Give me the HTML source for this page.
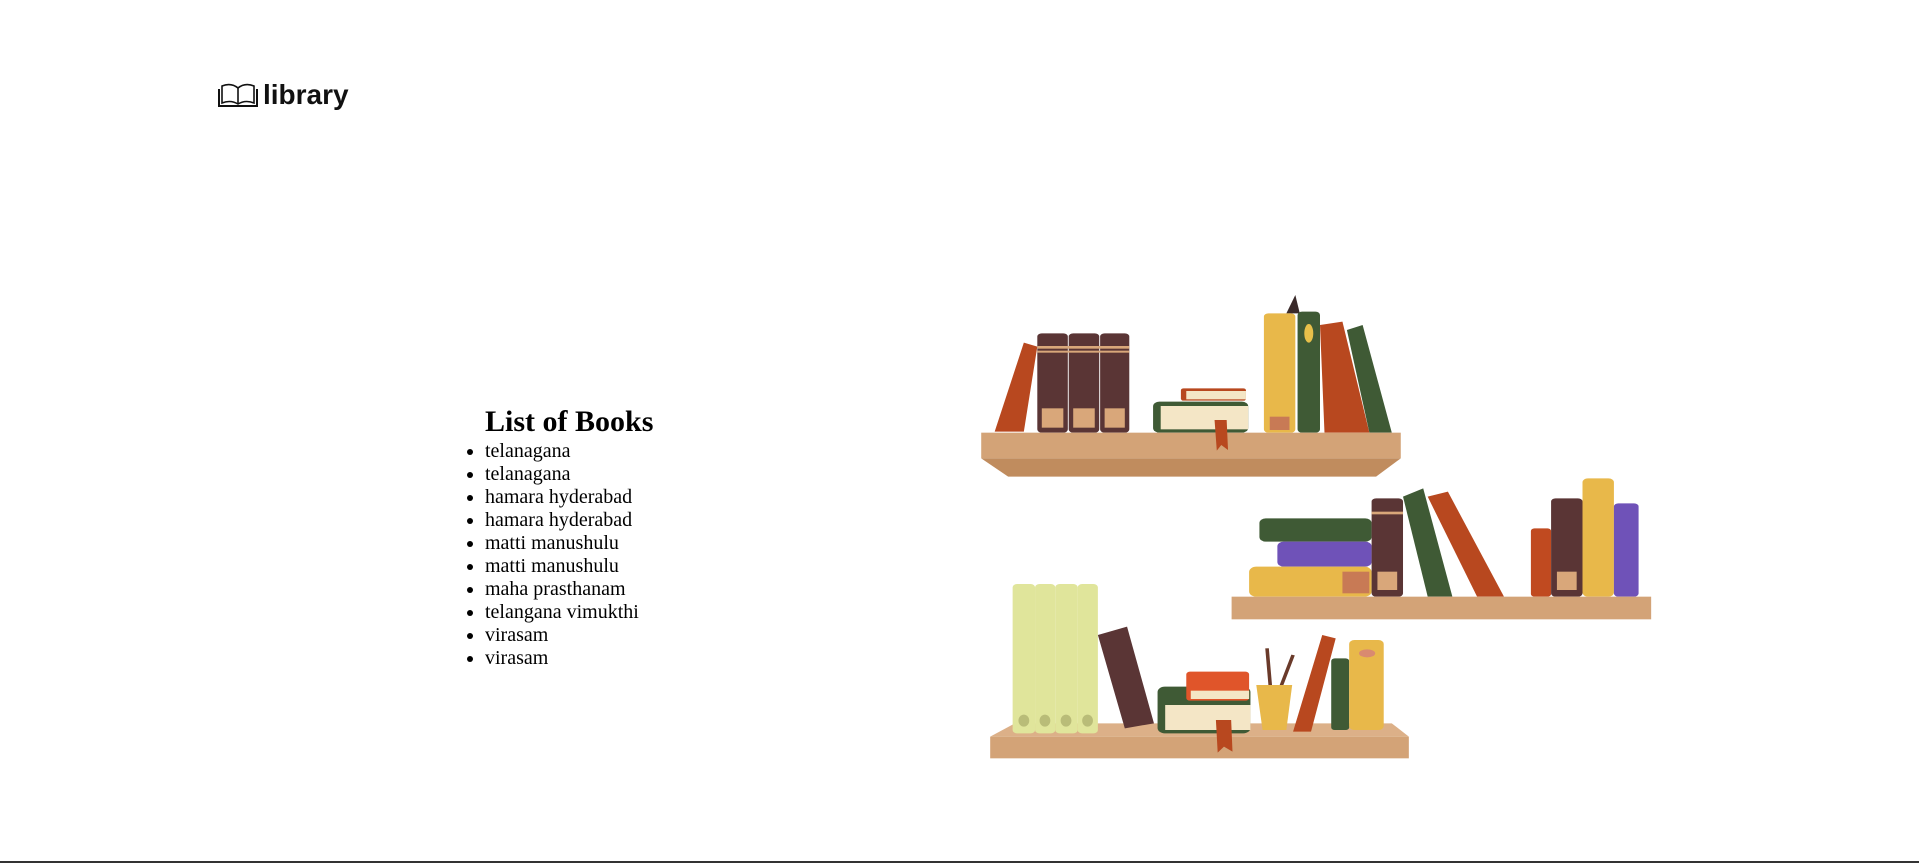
<!DOCTYPE html>
<html><head><meta charset="utf-8"><style>
html,body{margin:0;padding:0;background:#fff;width:1919px;height:863px;overflow:hidden;position:relative}
.logo{position:absolute;left:218px;top:80px;display:flex;align-items:center}
.logo span{font-family:"Liberation Sans",sans-serif;font-weight:bold;font-size:28px;color:#111;margin-left:5px;letter-spacing:0px;line-height:30px}
h2{position:absolute;left:485px;top:404px;margin:0;font-family:"Liberation Serif",serif;font-size:30px;font-weight:bold;line-height:36px}
ul{position:absolute;left:445px;top:440px;margin:0;padding-left:40px;font-family:"Liberation Serif",serif;font-size:20px;line-height:23px}
.bl{position:absolute;left:0;top:861px;width:1919px;height:2px;background:#333}
svg.shelf{position:absolute;left:970px;top:280px}
</style></head><body>
<div class="logo">
<svg width="40" height="26" viewBox="0 0 40 26" fill="none" stroke="#111" stroke-width="1.6">
<path d="M20 6 C15 2 9 2 4 4 V21 C9 19 15 19 20 22 C25 19 31 19 36 21 V4 C31 2 25 2 20 6 Z"/>
<path d="M20 6 V22"/>
<path d="M1 7 V24 H39 V7" stroke-width="2"/>
</svg>
<span>library</span></div>
<h2>List of Books</h2>
<ul><li>telanagana</li><li>telanagana</li><li>hamara hyderabad</li><li>hamara hyderabad</li><li>matti manushulu</li><li>matti manushulu</li><li>maha prasthanam</li><li>telangana vimukthi</li><li>virasam</li><li>virasam</li></ul>
<svg class="shelf" width="700" height="490" viewBox="0 0 1560 1470" preserveAspectRatio="none">
<!-- top shelf -->
<polygon points="55,455 120,455 150,200 120,188" fill="#b8481f"/>
<g fill="#5a3535"><rect x="150" y="160" width="68" height="298" rx="10"/><rect x="220" y="160" width="68" height="298" rx="10"/><rect x="290" y="160" width="65" height="298" rx="10"/></g>
<g fill="#d9a77a"><rect x="150" y="198" width="205" height="8"/><rect x="150" y="212" width="205" height="6"/><rect x="160" y="385" width="48" height="58"/><rect x="230" y="385" width="48" height="58"/><rect x="300" y="385" width="45" height="58"/></g>
<rect x="408" y="365" width="212" height="93" rx="14" fill="#3f5a35"/><rect x="425" y="378" width="195" height="70" fill="#f4e6c6"/>
<rect x="470" y="325" width="145" height="37" rx="6" fill="#b8481f"/><rect x="482" y="333" width="133" height="25" fill="#f4e6c6"/>
<polygon points="705,100 725,45 735,100" fill="#3a2a2a"/>
<rect x="655" y="100" width="70" height="358" rx="10" fill="#e8b84a"/><rect x="668" y="410" width="44" height="40" fill="#c87a55"/>
<rect x="730" y="95" width="50" height="363" rx="10" fill="#3f5a35"/><ellipse cx="755" cy="160" rx="10" ry="28" fill="#e8c04a"/>
<polygon points="790,458 890,458 830,125 780,135" fill="#b8481f"/>
<polygon points="840,150 875,135 940,458 890,458" fill="#3f5a35"/>
<rect x="25" y="458" width="935" height="77" fill="#d3a377"/>
<polygon points="25,535 960,535 905,590 85,590" fill="#c08c5e"/>
<polygon points="545,420 572,420 575,510 560,495 550,512" fill="#b8481f"/>
<!-- middle shelf -->
<rect x="645" y="715" width="250" height="70" rx="14" fill="#3f5a35"/>
<rect x="685" y="785" width="210" height="75" rx="14" fill="#6f52b8"/>
<rect x="622" y="860" width="273" height="90" rx="16" fill="#e8b84a"/><rect x="830" y="875" width="60" height="65" fill="#c87a55"/>
<rect x="895" y="655" width="70" height="295" rx="10" fill="#5a3535"/><rect x="908" y="875" width="44" height="55" fill="#d9a77a"/><rect x="895" y="695" width="70" height="8" fill="#d9a77a"/>
<polygon points="965,650 1010,625 1075,950 1020,950" fill="#3f5a35"/>
<polygon points="1020,650 1065,635 1190,950 1130,950" fill="#b8481f"/>
<rect x="1250" y="745" width="45" height="205" rx="8" fill="#c04a20"/>
<rect x="1295" y="655" width="70" height="295" rx="10" fill="#5a3535"/><rect x="1308" y="875" width="44" height="55" fill="#d9a77a"/>
<rect x="1365" y="595" width="70" height="355" rx="12" fill="#e8b84a"/>
<rect x="1435" y="670" width="55" height="280" rx="10" fill="#6f52b8"/>
<rect x="583" y="950" width="935" height="68" fill="#d3a377"/>
<!-- bottom shelf -->
<polygon points="100,1330 940,1330 978,1370 45,1370" fill="#dcb088"/>
<g fill="#e0e59b"><rect x="95" y="912" width="50" height="448" rx="10"/><rect x="145" y="912" width="45" height="448" rx="10"/><rect x="190" y="912" width="50" height="448" rx="10"/><rect x="240" y="912" width="45" height="448" rx="10"/></g>
<g fill="#b9bc78"><ellipse cx="120" cy="1322" rx="12" ry="18"/><ellipse cx="167" cy="1322" rx="12" ry="18"/><ellipse cx="214" cy="1322" rx="12" ry="18"/><ellipse cx="262" cy="1322" rx="12" ry="18"/></g>
<polygon points="285,1065 350,1040 410,1330 345,1345" fill="#5a3535"/>
<rect x="418" y="1220" width="207" height="140" rx="16" fill="#3f5a35"/><rect x="435" y="1275" width="190" height="75" fill="#f4e6c6"/>
<rect x="482" y="1175" width="140" height="87" rx="8" fill="#e0552a"/><rect x="492" y="1232" width="130" height="25" fill="#f4e6c6"/>
<path d="M670 1230 L662 1105 M690 1230 L720 1125" stroke="#6a3a2a" stroke-width="8"/>
<polygon points="638,1215 718,1215 705,1350 652,1350" fill="#e8b84a"/>
<polygon points="720,1355 760,1355 815,1075 785,1065" fill="#b8481f"/>
<rect x="805" y="1135" width="40" height="215" rx="8" fill="#3f5a35"/>
<rect x="845" y="1080" width="77" height="270" rx="12" fill="#e8b84a"/><ellipse cx="885" cy="1120" rx="18" ry="12" fill="#d98a70"/>
<rect x="45" y="1370" width="933" height="65" fill="#d3a377"/>
<polygon points="548,1320 582,1320 585,1415 566,1400 552,1418" fill="#b8481f"/>
</svg>
<div class="bl"></div>
</body></html>
